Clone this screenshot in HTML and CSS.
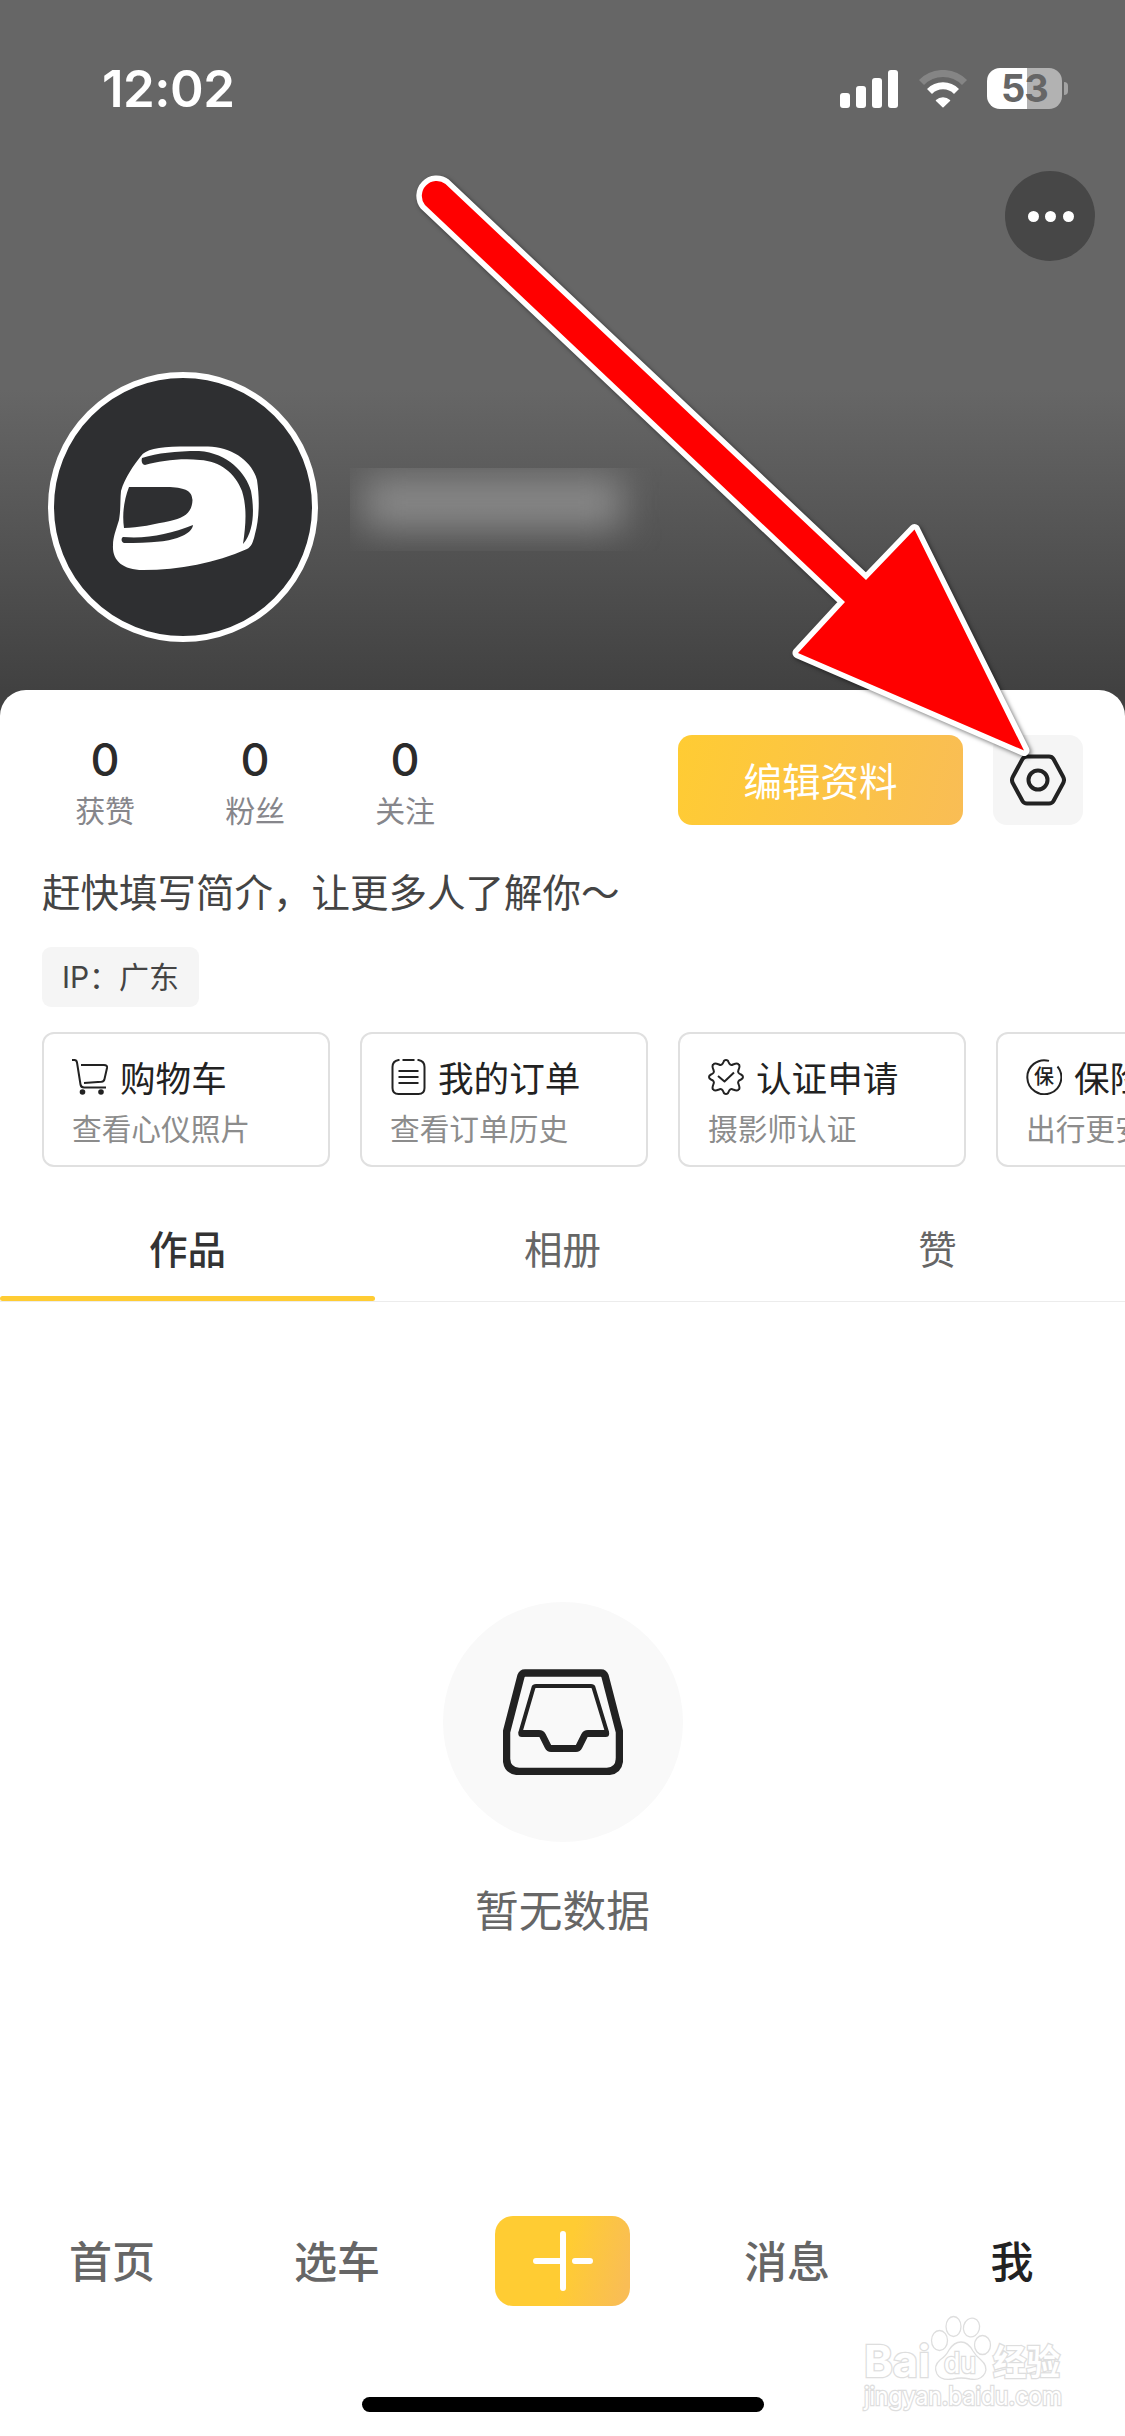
FILE: index.html
```html
<!DOCTYPE html>
<html lang="zh-CN">
<head>
<meta charset="utf-8">
<title>我</title>
<link rel="stylesheet" href="styles.css">
</head>
<body>
<div class="screen">
  <header class="hero">
    <div class="status">
      <span class="time">12:02</span>
      <div class="indicators">
        <svg class="signal" width="58" height="38" viewBox="0 0 58 38" fill="#fff">
          <rect x="0" y="23" width="10" height="15" rx="3"/><rect x="16" y="16" width="10" height="22" rx="3"/><rect x="32" y="8" width="10" height="30" rx="3"/><rect x="48" y="0" width="10" height="38" rx="3"/>
        </svg>
        <svg class="wifi" width="50" height="38" viewBox="0 0 50 38" fill="none" stroke-linejoin="round">
          <path d="M3.500 12.500A30 30 0 0 1 46.500 12.500" stroke="#858585" stroke-width="7"/>
          <path d="M11.500 21.500A19 19 0 0 1 38.500 21.500" stroke="#fff" stroke-width="7"/>
          <path d="M18.500 30.500A9.500 9.500 0 0 1 31.500 30.500L25 36.800Z" fill="#fff" stroke="#fff" stroke-width="1.500"/>
        </svg>
        <div class="battery"><span class="level">53</span><i class="nub"></i></div>
      </div>
    </div>
    <div class="topbar"><button class="more"><i></i><i></i><i></i></button></div>
    <div class="identity">
      <div class="avatar">
        <svg width="258" height="258" viewBox="54 378 258 258">
          <path fill="#fff" d="M141 456C145 450 158 446.500 180 446.500H208C232 447 252 461 257 480C260 500 259 520 255 534C253 543 251 547 247 549C215 563 180 570 143 570C122 570 112 560 113 545C113 537 116 530 119 520C121 508 120 500 121 491C125 477 134 465 141 456Z"/>
          <g fill="#2e2f31">
            <path d="M129 487H170C186 488 192 491 192.500 500C192 513 184 518 170 521C155 524 138 528 124 528C122 514 124 500 129 487Z"/>
            <path d="M123 537C148 539 170 534 193 525C192 534 176 540 160 541.500C148 543 136 543 124 543C121 542 121 538 123 537Z"/>
            <path d="M142 458C158 453 175 451 199 451C228 453 246 473 251 491C254 507 255 530 243 544C246 524 247 507 242 491C235 473 220 461 200 460C180 458 160 461 145 465C142 465 141 461 142 458Z"/>
          </g>
        </svg>
      </div>
      <div class="nickname"><i></i></div>
    </div>
  </header>

  <main class="panel">
    <section class="summary">
      <dl class="stats">
        <div><dd>0</dd><dt>获赞</dt></div>
        <div><dd>0</dd><dt>粉丝</dt></div>
        <div><dd>0</dd><dt>关注</dt></div>
      </dl>
      <button class="edit">编辑资料</button>
      <button class="settings">
        <svg width="56" height="52" viewBox="0 0 56 52" fill="none" stroke="#222" stroke-width="4">
          <path d="M17 2.500H39Q42 2.500 43.500 5L53 22.500Q55 26 53 29.500L43.500 47Q42 49.500 39 49.500H17Q14 49.500 12.500 47L3 29.500Q1 26 3 22.500L12.500 5Q14 2.500 17 2.500Z"/><circle cx="28" cy="26" r="9.500"/>
        </svg>
      </button>
    </section>
    <p class="bio">赶快填写简介，让更多人了解你～</p>
    <div class="region">IP：广东</div>

    <section class="cards">
      <article class="card">
        <h3><svg width="36" height="36" viewBox="0 0 36 36" fill="none" stroke="#222" stroke-width="2" stroke-linejoin="round"><path d="M0 1H2.500Q4.500 1 5 3.500L8.500 25.500Q9 28.500 12 28.500H34M9 6H32Q35.500 6 35 9L32.500 20Q32 22.500 29.500 22.800L12 24"/><circle cx="10.500" cy="33" r="2.800" fill="#222" stroke="none"/><circle cx="29" cy="33" r="2.800" fill="#222" stroke="none"/></svg><span>购物车</span></h3>
        <p>查看心仪照片</p>
      </article>
      <article class="card">
        <h3><svg width="36" height="36" viewBox="-1.500 0 36 36" fill="none" stroke="#222" stroke-width="2"><path d="M8 1H7Q1 2 1 8V29Q1 35 7 35H27Q33 35 33 29V8Q33 2 27 1H26M11 1H23M7 12H27M7 18H27M7 24H27"/></svg><span>我的订单</span></h3>
        <p>查看订单历史</p>
      </article>
      <article class="card">
        <h3><svg width="36" height="36" viewBox="0 0 36 36" fill="none" stroke="#222" stroke-width="2" stroke-linejoin="round"><path d="M18 1Q20 1 20.500 3Q22 7 25 5.500Q30 3.500 30.500 5.500Q32.500 6 30.500 11Q29 14 33 15.500Q35 16.500 35 18Q35 19.500 33 20.500Q29 22 30.500 25Q32.500 30 30.500 30.500Q30 32.500 25 30.500Q22 29 20.500 33Q20 35 18 35Q16 35 15.500 33Q14 29 11 30.500Q6 32.500 5.500 30.500Q3.500 30 5.500 25Q7 22 3 20.500Q1 19.500 1 18Q1 16.500 3 15.500Q7 14 5.500 11Q3.500 6 5.500 5.500Q6 3.500 11 5.500Q14 7 15.500 3Q16 1 18 1ZM10 17L16.500 22.500L26 13.500"/></svg><span>认证申请</span></h3>
        <p>摄影师认证</p>
      </article>
      <article class="card">
        <h3><svg width="36" height="36" viewBox="0 0 36 36"><path d="M23 1.900A17 17 0 1 0 31.500 7.500" fill="none" stroke="#222" stroke-width="2"/><text x="18" y="25.300" text-anchor="middle" class="seal">保</text></svg><span>保险服务</span></h3>
        <p>出行更安心</p>
      </article>
    </section>

    <nav class="tabs">
      <a class="on">作品</a><a>相册</a><a>赞</a>
    </nav>

    <section class="empty">
      <div class="disc">
        <svg width="120" height="106" viewBox="0 0 120 106" fill="none" stroke="#222" stroke-linejoin="round" stroke-linecap="round">
          <path stroke-width="7.500" d="M22 4H98Q101 4 102 7L116.500 63V90Q116 102 104 102.500H16Q4 102 3.500 90V63L18 7Q19 4 22 4Z"/>
          <path stroke-width="4" d="M17.500 63L30.500 18.500Q31 17 33 17H88Q90 17 90.500 18.500L104 63"/>
          <path stroke-width="7" d="M18.800 64.500H36Q38.500 64.500 39.500 66.500L45 77.500Q46 79.500 48 79.500H73Q75 79.500 76 77.500L81.500 66.500Q82.500 64.500 85 64.500H102.700"/>
        </svg>
      </div>
      <p>暂无数据</p>
    </section>
  </main>

  <nav class="bottom">
    <a>首页</a><a>选车</a>
    <a><span class="add"><svg width="60" height="60" viewBox="0 0 60 60" stroke="#fff" stroke-width="6" stroke-linecap="round"><path d="M30 3V57M3 30H30M42 30H57"/></svg></span></a>
    <a>消息</a><a class="on">我</a>
  </nav>
  <div class="home-bar"></div>

  <svg class="watermark" width="220" height="110" viewBox="0 0 220 110">
    <g fill="#fff" stroke="#dedede" stroke-width="1.300">
      <g class="mark"><text x="4" y="67" font-size="44" textLength="66" lengthAdjust="spacingAndGlyphs">Bai</text><text x="133" y="65" font-size="35" textLength="67" lengthAdjust="spacingAndGlyphs">经验</text></g>
      <ellipse cx="79.500" cy="30.500" rx="8" ry="10"/><ellipse cx="93.500" cy="16.500" rx="7.500" ry="10"/><ellipse cx="111.500" cy="17.500" rx="8" ry="9.500" transform="rotate(15 111.500 17.500)"/><ellipse cx="122.500" cy="35" rx="8" ry="9.500"/>
      <path d="M101 32Q108 32 113 41Q116 46 121 50Q128 56 125 63Q121 71 110 69Q101 67 93 69Q81 71 77 64Q73 56 80 50Q86 46 89 40Q94 32 101 32Z"/>
      <text class="du" x="84" y="63" font-size="28" textLength="32" lengthAdjust="spacingAndGlyphs">du</text>
      <text class="site" x="4" y="95" font-size="25" textLength="198" lengthAdjust="spacingAndGlyphs">jingyan.baidu.com</text>
    </g>
  </svg>
  <svg class="arrow" width="660" height="620" viewBox="400 160 660 620">
    <path class="edge" d="M425 205A14.800 14.800 0 0 1 445.500 184L866 580L914.500 529.500L1024 750.500L798 653L845 602Z"/>
    <path fill="#f00" d="M425 205A14.800 14.800 0 0 1 445.500 184L866 580L914.500 529.500L1024 750.500L798 653L845 602Z"/>
  </svg>
</div>
</body>
</html>
```
FILE: styles.css
```css
* { box-sizing: border-box; margin: 0; padding: 0; }
body { background: #fff; font-family: Inter, "Noto Sans CJK SC", sans-serif; color: #222; }
button { border: 0; font: inherit; }
svg { display: block; flex: none; }
.screen { position: relative; width: 1125px; height: 2436px; overflow: hidden; display: flex; flex-direction: column; background: #fff; }

/* header */
.hero { height: 730px; flex: none; background: linear-gradient(#666 0, #666 390px, #414141 690px); }
.status { height: 171px; padding: 68px 57px 0 102px; display: flex; justify-content: space-between; align-items: flex-start; }
.time { color: #fff; font-size: 51px; font-weight: 600; line-height: 42px; letter-spacing: -.5px; }
.indicators { display: flex; align-items: center; gap: 19.500px; height: 41px; }
.battery { display: flex; align-items: center; gap: 2px; }
.level { width: 75px; height: 41px; border-radius: 13px; background: linear-gradient(90deg, #fff 40px, #b2b2b2 40px); color: #666; font-size: 38px; font-weight: 700; line-height: 41px; text-align: center; letter-spacing: -1px; }
.nub { width: 4px; height: 13px; border-radius: 0 4px 4px 0; background: #a3a3a3; }
.topbar { height: 201px; display: flex; justify-content: flex-end; padding-right: 30px; }
.more { width: 90px; height: 90px; padding-left: 1px; border-radius: 50%; background: #474747; display: flex; align-items: center; justify-content: center; gap: 6.500px; }
.more i { width: 11px; height: 11px; border-radius: 50%; background: #fff; }
.identity { display: flex; align-items: center; gap: 32px; padding-left: 48px; }
.avatar { width: 270px; height: 270px; border: 6px solid #fff; border-radius: 50%; background: #2e2f31; overflow: hidden; }
.nickname { width: 314px; height: 83px; margin-top: 5px; padding: 8px 42px 22px 14px; overflow: hidden; }
.nickname i { display: block; height: 53px; background: #888; filter: blur(18px); }

/* profile */
.panel { position: relative; flex: 1; margin-top: -40px; padding-top: 45px; border-radius: 26px 26px 0 0; background: #fff; }
.summary { display: flex; height: 90px; padding: 0 42px 0 30px; }
.stats { display: flex; width: 648px; }
.stats div { width: 150px; text-align: center; }
.stats dd { font-size: 45px; font-weight: 500; line-height: 50px; color: #2b2b2b; }
.stats dt { font-size: 30px; line-height: 36px; margin-top: 8px; color: #86868b; letter-spacing: -.3px; }
.edit { width: 285px; height: 90px; padding-bottom: 3px; border-radius: 14px; background: linear-gradient(105deg, #fc3, #f9bd55); color: #fff; font-size: 38.500px; }
.settings { width: 90px; height: 90px; margin-left: 30px; border-radius: 14px; background: #f5f5f5; display: flex; align-items: center; justify-content: center; }
.bio { margin: 38px 42px 0; font-size: 38.500px; line-height: 60px; color: #444; white-space: nowrap; }
.region { width: 157px; height: 60px; margin: 24px 0 0 42px; border-radius: 9px; background: #f5f5f5; color: #444; font-size: 30px; line-height: 60px; text-align: center; white-space: nowrap; }
.cards { display: flex; gap: 30px; margin-top: 25px; padding-left: 42px; overflow: hidden; }
.card { flex: none; width: 288px; height: 135px; padding: 23px 0 0 28px; border: 2px solid #e0e0e0; border-radius: 12px; white-space: nowrap; }
.card h3 { display: flex; align-items: center; gap: 12px; height: 42px; font-size: 35.600px; font-weight: 400; color: #222; }
.card h3 svg { margin-bottom: 2px; }
.card h3 span { margin-bottom: 4px; }
.card p { margin-top: 12px; font-size: 29.700px; line-height: 36px; color: #8c8c8c; }
.seal { font-size: 20px; font-weight: 500; fill: #222; }
.tabs { display: flex; height: 135px; border-bottom: 1px solid #ececec; }
.tabs a { flex: 1; height: 134px; padding-top: 53px; text-align: center; font-size: 38.500px; line-height: 60px; color: #666; }
.tabs .on { color: #333; font-weight: 500; position: relative; }
.tabs .on::after { content: ""; position: absolute; left: 0; right: 0; bottom: 0; height: 5px; border-radius: 3px; background: #fc3; }
.empty { display: flex; flex-direction: column; align-items: center; margin-top: 300px; }
.disc { width: 240px; height: 240px; border-radius: 50%; background: #f9f9f9; display: flex; align-items: center; justify-content: center; }
.empty p { margin-top: 40px; font-size: 43.700px; line-height: 60px; color: #666; }

/* bottom navigation */
.bottom { position: relative; height: 90px; flex: none; display: flex; }
.bottom a { width: 225px; padding: 0 1px 4px 0; display: flex; align-items: center; justify-content: center; font-size: 43px; font-weight: 500; color: #666; }
.bottom a:nth-child(3) { padding: 0; }
.bottom .on { color: #222; }
.add { width: 135px; height: 90px; border-radius: 18px; background: linear-gradient(105deg, #fc3 52%, #f9bd55 94%); display: flex; align-items: center; justify-content: center; }
.home-bar { width: 402px; height: 15px; flex: none; margin: 91px auto 24px; border-radius: 8px; background: #000; }

/* overlays */
.arrow { position: absolute; left: 400px; top: 160px; }
.edge { fill: #fff; stroke: #fff; stroke-width: 11px; stroke-linejoin: round; filter: drop-shadow(2px 2px 2px rgba(0,0,0,.5)); }
.watermark { position: absolute; left: 860px; top: 2310px; }
.watermark text { paint-order: stroke; stroke-width: 2.600px; }
.mark { font-weight: 700; }
.du { font-weight: 500; }
.site { font-weight: 400; }
```
